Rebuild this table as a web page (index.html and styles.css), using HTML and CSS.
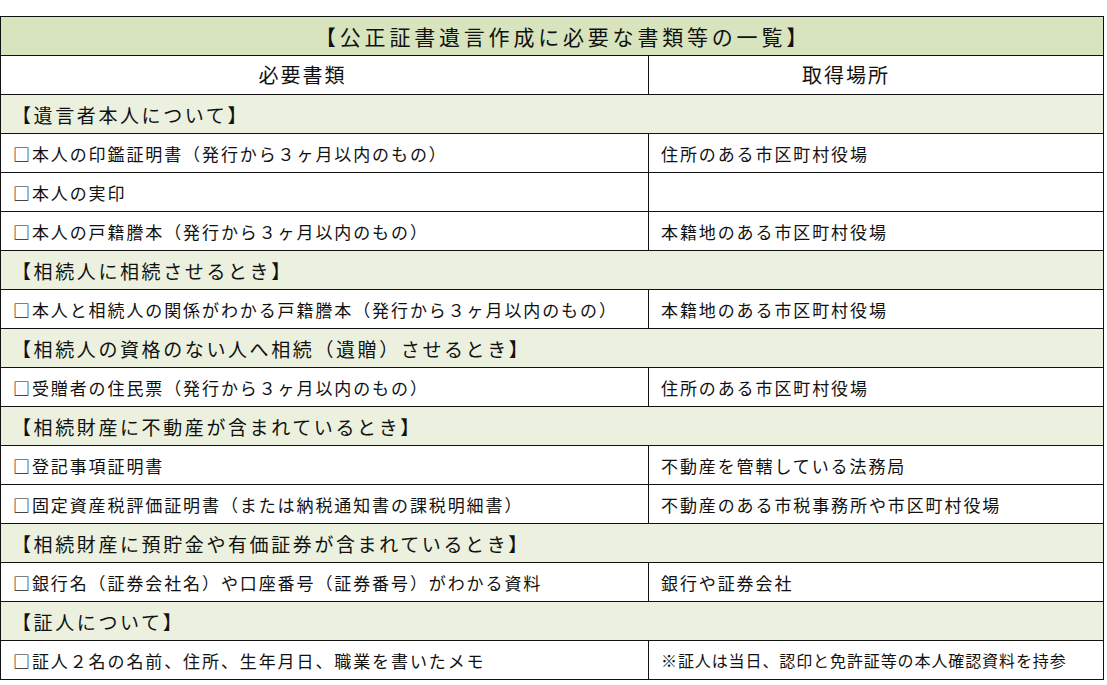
FILE: index.html
```html
<!DOCTYPE html>
<html lang="ja">
<head>
<meta charset="utf-8">
<link rel="stylesheet" href="styles.css">
</head>
<body>
<table class="list">
  <colgroup><col class="c-doc"><col class="c-place"></colgroup>
  <tr class="title"><td colspan="2">【公正証書遺言作成に必要な書類等の一覧】</td></tr>
  <tr class="head"><td class="h-doc">必要書類</td><td class="h-place">取得場所</td></tr>
  <tr class="sec"><td colspan="2">【遺言者本人について】</td></tr>
  <tr class="item"><td>□本人の印鑑証明書（発行から３ヶ月以内のもの）</td><td>住所のある市区町村役場</td></tr>
  <tr class="item"><td>□本人の実印</td><td></td></tr>
  <tr class="item"><td>□本人の戸籍謄本（発行から３ヶ月以内のもの）</td><td>本籍地のある市区町村役場</td></tr>
  <tr class="sec"><td colspan="2">【相続人に相続させるとき】</td></tr>
  <tr class="item"><td>□本人と相続人の関係がわかる戸籍謄本（発行から３ヶ月以内のもの）</td><td>本籍地のある市区町村役場</td></tr>
  <tr class="sec"><td colspan="2">【相続人の資格のない人へ相続（遺贈）させるとき】</td></tr>
  <tr class="item"><td>□受贈者の住民票（発行から３ヶ月以内のもの）</td><td>住所のある市区町村役場</td></tr>
  <tr class="sec"><td colspan="2">【相続財産に不動産が含まれているとき】</td></tr>
  <tr class="item"><td>□登記事項証明書</td><td>不動産を管轄している法務局</td></tr>
  <tr class="item"><td>□固定資産税評価証明書（または納税通知書の課税明細書）</td><td>不動産のある市税事務所や市区町村役場</td></tr>
  <tr class="sec"><td colspan="2">【相続財産に預貯金や有価証券が含まれているとき】</td></tr>
  <tr class="item"><td>□銀行名（証券会社名）や口座番号（証券番号）がわかる資料</td><td>銀行や証券会社</td></tr>
  <tr class="sec"><td colspan="2">【証人について】</td></tr>
  <tr class="item"><td>□証人２名の名前、住所、生年月日、職業を書いたメモ</td><td class="note">※証人は当日、認印と免許証等の本人確認資料を持参</td></tr>
</table>
</body>
</html>
```
FILE: styles.css
```css
html, body {
  margin: 0;
  padding: 0;
  background: #ffffff;
}
body {
  padding-top: 16px;
  font-family: "Noto Sans CJK JP", "Noto Sans", sans-serif;
  color: #111111;
}
.list {
  border-collapse: collapse;
  table-layout: fixed;
  width: 1103px;
}
.c-doc { width: 648px; }
.c-place { width: 455px; }
.list td {
  border: 1px solid #111111;
  height: 38px;
  padding: 0 0 0 12px;
  vertical-align: middle;
  white-space: nowrap;
  line-height: 1;
}
.title td {
  background: #d7e4bd;
  text-align: center;
  font-size: 21px;
  letter-spacing: 3.8px;
  padding-left: 22px;
}
.head td {
  text-align: center;
  font-size: 20px;
  letter-spacing: 2px;
}
.head .h-doc { padding: 0 44px 0 0; }
.head .h-place { padding: 0 60px 0 0; }
.sec td {
  background: #ebf1de;
  font-size: 19px;
  letter-spacing: 2.6px;
  padding-left: 11px;
}
.item td {
  font-size: 17px;
  letter-spacing: 1.9px;
}
.item td.note {
  font-size: 16px;
  letter-spacing: 0.9px;
}
```
